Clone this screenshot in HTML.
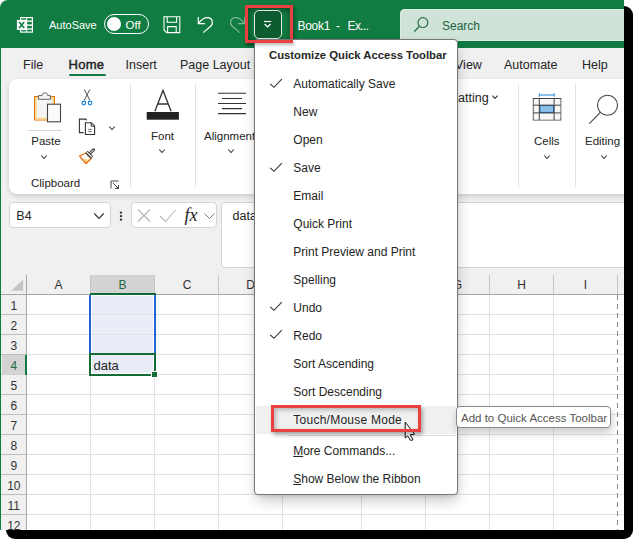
<!DOCTYPE html>
<html><head><meta charset="utf-8"><style>
html,body{margin:0;padding:0;background:#fff;width:639px;height:545px;overflow:hidden}
body{position:relative;font-family:"Liberation Sans", sans-serif}
#shadow{position:absolute;left:5.5px;top:5.5px;width:627.5px;height:533.5px;background:#000;border-radius:9px}
#win{position:absolute;left:0;top:0;width:624px;height:530px;overflow:hidden;border-top-left-radius:8px;background:#f0f0f0}
.t{position:absolute;white-space:pre;line-height:1;font-family:"Liberation Sans", sans-serif}
.r{position:absolute}
</style></head><body>
<div id="shadow"></div><div id="win"><div class="r" style="left:0px;top:0px;width:624px;height:48px;background:#107c41"></div><svg class="r" style="left:0px;top:0px;" width="40" height="40" viewBox="0 0 40 40">
<rect x="20" y="17" width="13" height="15.7" fill="#fff"/>
<rect x="21.2" y="18.2" width="5" height="1.6" fill="#107c41"/>
<rect x="27.2" y="18.2" width="4.6" height="2.3" fill="#107c41"/>
<rect x="27.2" y="21.8" width="4.6" height="2.6" fill="#107c41"/>
<rect x="27.2" y="25.8" width="4.6" height="2.6" fill="#107c41"/>
<rect x="27.2" y="29.7" width="4.6" height="1.8" fill="#107c41"/>
<rect x="21.2" y="30.1" width="5" height="1.4" fill="#107c41"/>
<rect x="16.9" y="19.9" width="9.6" height="10" fill="#fff"/>
<path d="M19.2 22 L24.2 28 M24.2 22 L19.2 28" stroke="#107c41" stroke-width="1.6"/>
</svg><div class="t" style="left:49.00px;top:20.09px;font-size:11px;color:#fff;font-weight:400;">AutoSave</div><div class="r" style="left:104px;top:14px;width:45px;height:20px;border:1.3px solid #fff;border-radius:10px;box-sizing:border-box"></div><div class="r" style="left:107px;top:17px;width:14px;height:14px;background:#fff;border-radius:50%"></div><div class="t" style="left:125.50px;top:19.67px;font-size:11.5px;color:#fff;font-weight:400;">Off</div><svg class="r" style="left:160px;top:14px;" width="24" height="22" viewBox="0 0 24 22">
<path d="M4 2.8 H19.8 V18.6 H6.6 L4 16 Z" fill="none" stroke="#fff" stroke-width="1.1"/>
<path d="M7.2 3 V8.2 H16.6 V3" fill="none" stroke="#fff" stroke-width="1.1"/>
<path d="M7.6 18.5 V12.6 H16.2 V18.5" fill="none" stroke="#fff" stroke-width="1.1"/>
</svg><svg class="r" style="left:190px;top:10px;" width="30" height="30" viewBox="0 0 30 30">
<path d="M8.3 7 V13.6 H15" fill="none" stroke="#fff" stroke-width="1.2"/>
<path d="M8.8 13 C12 8.5 15.5 7.2 18.5 7.6 C22.5 8.3 23.5 13 21.2 15.8 L13.2 22.6" fill="none" stroke="#fff" stroke-width="1.2"/>
</svg><svg class="r" style="left:220px;top:10px;" width="30" height="30" viewBox="0 0 30 30">
<g opacity="0.45"><path d="M24.7 7 V13.6 H18" fill="none" stroke="#fff" stroke-width="1.2"/>
<path d="M24.2 13 C21 8.5 17.5 7.2 14.5 7.6 C10.5 8.3 9.5 13 11.8 15.8 L19.8 22.6" fill="none" stroke="#fff" stroke-width="1.2"/></g>
</svg><div class="t" style="left:297.50px;top:20.34px;font-size:12px;color:#fff;font-weight:400;letter-spacing:-0.3px">Book1</div><div class="t" style="left:336.00px;top:20.34px;font-size:12px;color:#fff;font-weight:400;">-</div><div class="t" style="left:347.50px;top:20.34px;font-size:12px;color:#fff;font-weight:400;letter-spacing:-0.6px">Ex...</div><div class="r" style="left:400px;top:9px;width:260px;height:32px;background:#cfe3d8;border-radius:4px 0 0 0;border:1px solid #dcece3;box-sizing:border-box;box-shadow:0 0 1px #0a6a34"></div><svg class="r" style="left:410px;top:14px;" width="20" height="20" viewBox="0 0 20 20">
<circle cx="12.9" cy="8.6" r="4.9" fill="none" stroke="#2a6e45" stroke-width="1.2"/>
<path d="M9.4 12.1 L4.3 17.7" stroke="#2a6e45" stroke-width="1.3"/>
</svg><div class="t" style="left:442.00px;top:20.44px;font-size:12px;color:#22643c;font-weight:400;">Search</div><div class="r" style="left:0px;top:48px;width:624px;height:250px;background:#f0f0f0"></div><div class="t" style="left:23.00px;top:58.72px;font-size:12.5px;color:#242424;font-weight:400;">File</div><div class="t" style="left:68.50px;top:58.30px;font-size:13px;color:#242424;font-weight:400;-webkit-text-stroke:0.45px #242424;letter-spacing:0.3px">Home</div><div class="r" style="left:68.5px;top:73.5px;width:37px;height:2.5px;background:#107c41;border-radius:1px"></div><div class="t" style="left:125.50px;top:58.72px;font-size:12.5px;color:#242424;font-weight:400;">Insert</div><div class="t" style="left:180.00px;top:58.72px;font-size:12.5px;color:#242424;font-weight:400;">Page Layout</div><div class="t" style="left:455.00px;top:58.72px;font-size:12.5px;color:#242424;font-weight:400;">View</div><div class="t" style="left:504.00px;top:58.72px;font-size:12.5px;color:#242424;font-weight:400;">Automate</div><div class="t" style="left:582.00px;top:58.72px;font-size:12.5px;color:#242424;font-weight:400;">Help</div><div class="r" style="left:9px;top:79px;width:640px;height:115px;background:#fff;border-radius:8px;box-shadow:0 2px 5px rgba(0,0,0,0.16)"></div><div class="r" style="left:130px;top:84px;width:1px;height:103px;background:#e1e1e1"></div><div class="r" style="left:195px;top:84px;width:1px;height:103px;background:#e1e1e1"></div><div class="r" style="left:518px;top:84px;width:1px;height:103px;background:#e1e1e1"></div><div class="r" style="left:574.5px;top:84px;width:1px;height:103px;background:#e1e1e1"></div><svg class="r" style="left:28px;top:86px;" width="40" height="40" viewBox="0 0 40 40">
<rect x="6.5" y="10.5" width="20" height="23.5" fill="#f5f5f5" stroke="#e07000" stroke-width="1"/>
<rect x="7.9" y="11.9" width="17.2" height="20.7" fill="none" stroke="#fbd98f" stroke-width="1.7"/>
<path d="M10.5 13.3 V9.6 H14.2 C14.4 7.2 15.8 6.8 17 6.8 C18.2 6.8 19.6 7.2 19.8 9.6 H22.5 V13.3 Z" fill="#f6f6f6" stroke="#666" stroke-width="1"/>
<rect x="19.5" y="18.2" width="13" height="17.6" fill="#fafafa" stroke="#444" stroke-width="1.1"/>
</svg><div class="r" style="left:28px;top:130px;width:34px;height:1px;background:#d6d6d6"></div><div class="t" style="left:31.30px;top:136.47px;font-size:11.5px;color:#242424;font-weight:400;">Paste</div><svg class="r" style="left:36.3px;top:149.4px;" width="16" height="16" viewBox="0 0 16 16"><path d="M5.25 6.5 L8 9.5 L10.75 6.5" fill="none" stroke="#333" stroke-width="1.1"/></svg><div class="t" style="left:31.00px;top:178.47px;font-size:11.5px;color:#242424;font-weight:400;">Clipboard</div><svg class="r" style="left:108px;top:178px;" width="14" height="14" viewBox="0 0 14 14">
<path d="M3 10.5 V3 H10.5" fill="none" stroke="#444" stroke-width="1"/>
<path d="M5 5 L10.5 10.5 M7 10.5 H10.5 V7" fill="none" stroke="#444" stroke-width="1"/>
</svg><svg class="r" style="left:76px;top:84px;" width="22" height="24" viewBox="0 0 22 24">
<path d="M8.3 5.5 L13.8 16.2 M13.8 5.5 L8.3 16.2" stroke="#555" stroke-width="1"/>
<circle cx="7.8" cy="19" r="1.8" fill="none" stroke="#1a86d9" stroke-width="1.2"/>
<circle cx="14.1" cy="19" r="1.8" fill="none" stroke="#1a86d9" stroke-width="1.2"/>
</svg><svg class="r" style="left:76px;top:116px;" width="22" height="22" viewBox="0 0 22 22">
<path d="M10.7 4.4 L9.8 3.1 H3.4 V16.6 H7.6" fill="none" stroke="#333" stroke-width="1.1"/>
<path d="M9.4 6.7 H15.3 L18.6 9.9 V18.5 H9.4 Z" fill="#fff" stroke="#333" stroke-width="1.1"/>
<path d="M15.2 6.7 V10.2 H18.6" fill="none" stroke="#333" stroke-width="1"/>
<path d="M12.2 13.4 H15.7 M12.2 15.6 H15.7" stroke="#555" stroke-width="0.9"/>
</svg><svg class="r" style="left:103.5px;top:119.5px;" width="16" height="16" viewBox="0 0 16 16"><path d="M5.25 6.5 L8 9.5 L10.75 6.5" fill="none" stroke="#333" stroke-width="1.1"/></svg><svg class="r" style="left:76px;top:146px;" width="22" height="20" viewBox="0 0 22 20">
<path d="M3.5 10 L10 7 L15.3 12.5 L10 17.5 Z" fill="#fff" stroke="#e36c09" stroke-width="1.3" stroke-linejoin="round"/>
<path d="M6.8 13.2 L12.8 13.5 L10 16.4 Z" fill="#f9c86a"/>
<path d="M12.6 8.8 L17.6 3.8" stroke="#444" stroke-width="3" stroke-linecap="round"/>
<path d="M12.6 8.8 L17.4 4" stroke="#fff" stroke-width="1"/>
<path d="M10.5 5.9 L16.1 11.5" stroke="#444" stroke-width="3.2"/>
<path d="M10.8 6.2 L15.8 11.2" stroke="#fff" stroke-width="1.1"/>
</svg><svg class="r" style="left:140px;top:86px;" width="44" height="38" viewBox="0 0 44 38">
<path d="M14.9 25.3 L23 4.4 L31.1 25.3 M18 18 H28.1" fill="none" stroke="#333" stroke-width="1.3"/>
<rect x="6.7" y="26" width="32.2" height="7.7" fill="#222"/>
</svg><div class="t" style="left:151.00px;top:130.87px;font-size:11.5px;color:#242424;font-weight:400;">Font</div><svg class="r" style="left:154.3px;top:143px;" width="16" height="16" viewBox="0 0 16 16"><path d="M5.25 6.5 L8 9.5 L10.75 6.5" fill="none" stroke="#333" stroke-width="1.1"/></svg><svg class="r" style="left:210px;top:88px;" width="44" height="30" viewBox="0 0 44 30">
<path d="M8 5.3 H36 M12 10.5 H32 M8 15.5 H36 M12 20.6 H32 M8 25.6 H36" stroke="#333" stroke-width="1.1"/>
</svg><div class="t" style="left:204.00px;top:130.87px;font-size:11.5px;color:#242424;font-weight:400;">Alignment</div><svg class="r" style="left:223px;top:143px;" width="16" height="16" viewBox="0 0 16 16"><path d="M5.25 6.5 L8 9.5 L10.75 6.5" fill="none" stroke="#333" stroke-width="1.1"/></svg><div class="t" style="left:458.00px;top:91.82px;font-size:12.5px;color:#242424;font-weight:400;">atting</div><svg class="r" style="left:487.3px;top:89.4px;" width="16" height="16" viewBox="0 0 16 16"><path d="M5.4 6.65 L8 9.35 L10.6 6.65" fill="none" stroke="#333" stroke-width="1.1"/></svg><svg class="r" style="left:528px;top:86px;" width="40" height="40" viewBox="0 0 40 40">
<path d="M11.3 9 H26.1 M11.3 7.3 V10.7 M26.1 7.3 V10.7" stroke="#1a86d9" stroke-width="1"/>
<rect x="5.3" y="12.5" width="27.5" height="21.5" fill="#fff" stroke="#444" stroke-width="1"/>
<rect x="5.8" y="13" width="26.5" height="20.5" fill="#f7f7f7"/><rect x="11.8" y="19.5" width="13.8" height="7" fill="#8cc1ea" stroke="#1a6fc0" stroke-width="1.2"/>
<path d="M5.3 19.2 H32.8 M5.3 26.9 H32.8 M11.3 12.5 V34 M26.1 12.5 V34" stroke="#444" stroke-width="1" fill="none"/>
</svg><div class="t" style="left:534.00px;top:135.87px;font-size:11.5px;color:#242424;font-weight:400;">Cells</div><svg class="r" style="left:538.5px;top:148.5px;" width="16" height="16" viewBox="0 0 16 16"><path d="M5.25 6.5 L8 9.5 L10.75 6.5" fill="none" stroke="#333" stroke-width="1.1"/></svg><svg class="r" style="left:585px;top:90px;" width="40" height="38" viewBox="0 0 40 38">
<circle cx="22.5" cy="15.2" r="10" fill="none" stroke="#444" stroke-width="1.1"/>
<path d="M15.3 22.3 L4.3 33.7" stroke="#444" stroke-width="1.1"/>
</svg><div class="t" style="left:585.00px;top:135.87px;font-size:11.5px;color:#242424;font-weight:400;">Editing</div><svg class="r" style="left:595.5px;top:148.5px;" width="16" height="16" viewBox="0 0 16 16"><path d="M5.25 6.5 L8 9.5 L10.75 6.5" fill="none" stroke="#333" stroke-width="1.1"/></svg><div class="r" style="left:9px;top:202px;width:101.5px;height:25.5px;background:#fff;border:1px solid #d4d4d4;border-radius:4px;box-sizing:border-box"></div><div class="t" style="left:16.30px;top:209.82px;font-size:12.5px;color:#242424;font-weight:400;">B4</div><svg class="r" style="left:91.3px;top:208.3px;" width="16" height="16" viewBox="0 0 16 16"><path d="M3.25 5.5 L8 10.5 L12.75 5.5" fill="none" stroke="#333" stroke-width="1.2"/></svg><svg class="r" style="left:116px;top:208px;" width="10" height="16" viewBox="0 0 10 16"><circle cx="5" cy="4.6" r="1.2" fill="#333"/><circle cx="5" cy="8.1" r="1.2" fill="#333"/><circle cx="5" cy="11.6" r="1.2" fill="#333"/></svg><div class="r" style="left:131.3px;top:202px;width:85.5px;height:25.5px;background:#fff;border:1px solid #d4d4d4;border-radius:4px;box-sizing:border-box"></div><svg class="r" style="left:131px;top:202px;" width="90" height="26" viewBox="0 0 90 26">
<path d="M7 7.5 L19 19.5 M19 7.5 L7 19.5" stroke="#b5b5b5" stroke-width="1.1"/>
<path d="M29 14 L34.5 19.5 L44.5 8" fill="none" stroke="#b5b5b5" stroke-width="1.1"/>
<path d="M73.5 11.5 L78.5 16.5 L83.5 11.5" fill="none" stroke="#777" stroke-width="1"/>
</svg><div class="t" style="left:184.5px;top:205.5px;font-family:'Liberation Serif',serif;font-style:italic;font-size:18px;color:#222">fx</div><div class="r" style="left:220.8px;top:202px;width:420px;height:65.5px;background:#fff;border:1px solid #d4d4d4;border-radius:4px;box-sizing:border-box"></div><div class="t" style="left:232.50px;top:210.02px;font-size:12.5px;color:#242424;font-weight:400;">data</div><div class="r" style="left:26.5px;top:294.5px;width:600px;height:240px;background:#fff"></div><div class="r" style="left:92.3px;top:296.3px;width:60.5px;height:76.5px;background:#e8edf8"></div><div class="r" style="left:0px;top:314px;width:26px;height:1px;background:#bdbdbd"></div><div class="r" style="left:26.5px;top:314px;width:600px;height:1px;background:#e1e1e1"></div><div class="r" style="left:0px;top:334px;width:26px;height:1px;background:#bdbdbd"></div><div class="r" style="left:26.5px;top:334px;width:600px;height:1px;background:#e1e1e1"></div><div class="r" style="left:0px;top:354px;width:26px;height:1px;background:#bdbdbd"></div><div class="r" style="left:26.5px;top:354px;width:600px;height:1px;background:#e1e1e1"></div><div class="r" style="left:0px;top:374px;width:26px;height:1px;background:#bdbdbd"></div><div class="r" style="left:26.5px;top:374px;width:600px;height:1px;background:#e1e1e1"></div><div class="r" style="left:0px;top:394px;width:26px;height:1px;background:#bdbdbd"></div><div class="r" style="left:26.5px;top:394px;width:600px;height:1px;background:#e1e1e1"></div><div class="r" style="left:0px;top:414px;width:26px;height:1px;background:#bdbdbd"></div><div class="r" style="left:26.5px;top:414px;width:600px;height:1px;background:#e1e1e1"></div><div class="r" style="left:0px;top:434px;width:26px;height:1px;background:#bdbdbd"></div><div class="r" style="left:26.5px;top:434px;width:600px;height:1px;background:#e1e1e1"></div><div class="r" style="left:0px;top:454px;width:26px;height:1px;background:#bdbdbd"></div><div class="r" style="left:26.5px;top:454px;width:600px;height:1px;background:#e1e1e1"></div><div class="r" style="left:0px;top:474px;width:26px;height:1px;background:#bdbdbd"></div><div class="r" style="left:26.5px;top:474px;width:600px;height:1px;background:#e1e1e1"></div><div class="r" style="left:0px;top:494px;width:26px;height:1px;background:#bdbdbd"></div><div class="r" style="left:26.5px;top:494px;width:600px;height:1px;background:#e1e1e1"></div><div class="r" style="left:0px;top:514px;width:26px;height:1px;background:#bdbdbd"></div><div class="r" style="left:26.5px;top:514px;width:600px;height:1px;background:#e1e1e1"></div><div class="r" style="left:0px;top:534px;width:26px;height:1px;background:#bdbdbd"></div><div class="r" style="left:26.5px;top:534px;width:600px;height:1px;background:#e1e1e1"></div><div class="r" style="left:90px;top:295px;width:1px;height:240px;background:#e1e1e1"></div><div class="r" style="left:154px;top:295px;width:1px;height:240px;background:#e1e1e1"></div><div class="r" style="left:218px;top:295px;width:1px;height:240px;background:#e1e1e1"></div><div class="r" style="left:282px;top:295px;width:1px;height:240px;background:#e1e1e1"></div><div class="r" style="left:361px;top:295px;width:1px;height:240px;background:#e1e1e1"></div><div class="r" style="left:425px;top:295px;width:1px;height:240px;background:#e1e1e1"></div><div class="r" style="left:489px;top:295px;width:1px;height:240px;background:#e1e1e1"></div><div class="r" style="left:553px;top:295px;width:1px;height:240px;background:#e1e1e1"></div><div class="r" style="left:617px;top:295px;width:1px;height:240px;background:repeating-linear-gradient(to bottom,#8a8a8a 0 5px,transparent 5px 9px)"></div><div class="r" style="left:90.5px;top:275px;width:64.5px;height:19.5px;background:#d3d3d3"></div><div class="r" style="left:90px;top:275px;width:1px;height:19.5px;background:#c6c6c6"></div><div class="r" style="left:154px;top:275px;width:1px;height:19.5px;background:#c6c6c6"></div><div class="r" style="left:218px;top:275px;width:1px;height:19.5px;background:#c6c6c6"></div><div class="r" style="left:282px;top:275px;width:1px;height:19.5px;background:#c6c6c6"></div><div class="r" style="left:361px;top:275px;width:1px;height:19.5px;background:#c6c6c6"></div><div class="r" style="left:425px;top:275px;width:1px;height:19.5px;background:#c6c6c6"></div><div class="r" style="left:489px;top:275px;width:1px;height:19.5px;background:#c6c6c6"></div><div class="r" style="left:553px;top:275px;width:1px;height:19.5px;background:#c6c6c6"></div><div class="r" style="left:617px;top:275px;width:1px;height:19.5px;background:#c6c6c6"></div><div class="r" style="left:0px;top:294px;width:624px;height:1px;background:#a6a6a6"></div><div class="r" style="left:26px;top:275px;width:1px;height:260px;background:#a6a6a6"></div><svg class="r" style="left:10px;top:278px;" width="16" height="14" viewBox="0 0 16 14"><path d="M1.3 12.8 H13.2 V1.4 Z" fill="#c4c4c4"/></svg><div class="t" style="left:-41.50px;width:200px;text-align:center;top:279.44px;font-size:12px;color:#333;font-weight:400;">A</div><div class="t" style="left:22.50px;width:200px;text-align:center;top:279.44px;font-size:12px;color:#1d6b3e;font-weight:400;">B</div><div class="t" style="left:87.00px;width:200px;text-align:center;top:279.44px;font-size:12px;color:#333;font-weight:400;">C</div><div class="t" style="left:150.50px;width:200px;text-align:center;top:279.44px;font-size:12px;color:#333;font-weight:400;">D</div><div class="t" style="left:221.50px;width:200px;text-align:center;top:279.44px;font-size:12px;color:#333;font-weight:400;">E</div><div class="t" style="left:293.00px;width:200px;text-align:center;top:279.44px;font-size:12px;color:#333;font-weight:400;">F</div><div class="t" style="left:357.50px;width:200px;text-align:center;top:279.44px;font-size:12px;color:#333;font-weight:400;">G</div><div class="t" style="left:421.60px;width:200px;text-align:center;top:279.44px;font-size:12px;color:#333;font-weight:400;">H</div><div class="t" style="left:485.50px;width:200px;text-align:center;top:279.44px;font-size:12px;color:#333;font-weight:400;">I</div><div class="r" style="left:2px;top:354.5px;width:24.5px;height:20px;background:#d3d3d3"></div><div class="t" style="left:-86.20px;width:200px;text-align:center;top:300.44px;font-size:12px;color:#333;font-weight:400;">1</div><div class="t" style="left:-86.20px;width:200px;text-align:center;top:320.44px;font-size:12px;color:#333;font-weight:400;">2</div><div class="t" style="left:-86.20px;width:200px;text-align:center;top:340.44px;font-size:12px;color:#333;font-weight:400;">3</div><div class="t" style="left:-86.20px;width:200px;text-align:center;top:360.44px;font-size:12px;color:#1d6b3e;font-weight:400;">4</div><div class="t" style="left:-86.20px;width:200px;text-align:center;top:380.44px;font-size:12px;color:#333;font-weight:400;">5</div><div class="t" style="left:-86.20px;width:200px;text-align:center;top:400.44px;font-size:12px;color:#333;font-weight:400;">6</div><div class="t" style="left:-86.20px;width:200px;text-align:center;top:420.44px;font-size:12px;color:#333;font-weight:400;">7</div><div class="t" style="left:-86.20px;width:200px;text-align:center;top:440.44px;font-size:12px;color:#333;font-weight:400;">8</div><div class="t" style="left:-86.20px;width:200px;text-align:center;top:460.44px;font-size:12px;color:#333;font-weight:400;">9</div><div class="t" style="left:-86.20px;width:200px;text-align:center;top:480.44px;font-size:12px;color:#333;font-weight:400;">10</div><div class="t" style="left:-86.20px;width:200px;text-align:center;top:500.44px;font-size:12px;color:#333;font-weight:400;">11</div><div class="t" style="left:-86.20px;width:200px;text-align:center;top:520.44px;font-size:12px;color:#333;font-weight:400;">12</div><div class="r" style="left:90px;top:293px;width:66px;height:2px;background:#0e6b35"></div><div class="r" style="left:25px;top:354.5px;width:2px;height:20px;background:#107c41"></div><div class="r" style="left:89px;top:295px;width:67px;height:58px;border:2px solid #2563d0;border-bottom:none;border-top:none;box-sizing:border-box"></div><div class="r" style="left:89px;top:353px;width:67px;height:23px;border:2px solid #156b36;box-sizing:border-box"></div><div class="r" style="left:150.8px;top:371px;width:7.2px;height:7px;background:#fff"></div><div class="r" style="left:151.9px;top:372px;width:5.1px;height:5px;background:#156b36"></div><div class="t" style="left:93.50px;top:359.20px;font-size:13px;color:#242424;font-weight:400;">data</div><div class="r" style="left:0px;top:40px;width:1.2px;height:490px;background:#107c41"></div><div class="r" style="left:247.5px;top:8px;width:43px;height:32px;background:#107c41;box-shadow:inset 3px 3px 5px rgba(0,0,0,0.28), inset -3px -1px 5px rgba(0,0,0,0.2)"></div><div class="r" style="left:254px;top:10px;width:28px;height:29px;background:#0d5c31;border:1px solid #e5e5e5;border-radius:5px;box-sizing:border-box"></div><svg class="r" style="left:254px;top:10px;" width="28" height="29" viewBox="0 0 28 29"><path d="M10 11.5 H17.2" stroke="#fff" stroke-width="1.1"/><path d="M10.6 14 L13.6 17 L16.6 14" fill="none" stroke="#fff" stroke-width="1.2"/></svg><div class="r" style="left:244.5px;top:5px;width:48.5px;height:38px;border:3px solid #ec3f42;box-sizing:border-box;box-shadow:2px 2px 4px rgba(0,0,0,0.3)"></div><div class="r" style="left:254px;top:39px;width:204px;height:455.5px;background:#fff;border:1px solid #787878;border-radius:4px;box-sizing:border-box;box-shadow:1px 7px 14px -2px rgba(0,0,0,0.24), 0 1px 3px rgba(0,0,0,0.10)"></div><div class="r" style="left:244.5px;top:40px;width:48.5px;height:3px;background:#ec3f42;box-shadow:1px 2px 3px rgba(0,0,0,0.3)"></div><div class="t" style="left:269.00px;top:49.83px;font-size:11.3px;color:#242424;font-weight:700;color:#262626">Customize Quick Access Toolbar</div><div class="r" style="left:256px;top:406px;width:200px;height:27.5px;background:#f0f0f0"></div><div class="t" style="left:293.30px;top:78.24px;font-size:12px;color:#242424;font-weight:400;">Automatically Save</div><svg class="r" style="left:266px;top:76.8px;" width="20" height="14" viewBox="0 0 20 14"><path d="M4.2 6.8 L8 10.3 L15.8 2.2" fill="none" stroke="#333" stroke-width="1.1"/></svg><div class="t" style="left:293.30px;top:106.19px;font-size:12px;color:#242424;font-weight:400;">New</div><div class="t" style="left:293.30px;top:134.14px;font-size:12px;color:#242424;font-weight:400;">Open</div><div class="t" style="left:293.30px;top:162.09px;font-size:12px;color:#242424;font-weight:400;">Save</div><svg class="r" style="left:266px;top:160.64999999999998px;" width="20" height="14" viewBox="0 0 20 14"><path d="M4.2 6.8 L8 10.3 L15.8 2.2" fill="none" stroke="#333" stroke-width="1.1"/></svg><div class="t" style="left:293.30px;top:190.04px;font-size:12px;color:#242424;font-weight:400;">Email</div><div class="t" style="left:293.30px;top:217.99px;font-size:12px;color:#242424;font-weight:400;">Quick Print</div><div class="t" style="left:293.30px;top:245.94px;font-size:12px;color:#242424;font-weight:400;">Print Preview and Print</div><div class="t" style="left:293.30px;top:273.89px;font-size:12px;color:#242424;font-weight:400;">Spelling</div><div class="t" style="left:293.30px;top:301.84px;font-size:12px;color:#242424;font-weight:400;">Undo</div><svg class="r" style="left:266px;top:300.4px;" width="20" height="14" viewBox="0 0 20 14"><path d="M4.2 6.8 L8 10.3 L15.8 2.2" fill="none" stroke="#333" stroke-width="1.1"/></svg><div class="t" style="left:293.30px;top:329.79px;font-size:12px;color:#242424;font-weight:400;">Redo</div><svg class="r" style="left:266px;top:328.34999999999997px;" width="20" height="14" viewBox="0 0 20 14"><path d="M4.2 6.8 L8 10.3 L15.8 2.2" fill="none" stroke="#333" stroke-width="1.1"/></svg><div class="t" style="left:293.30px;top:357.74px;font-size:12px;color:#242424;font-weight:400;">Sort Ascending</div><div class="t" style="left:293.30px;top:385.69px;font-size:12px;color:#242424;font-weight:400;">Sort Descending</div><div class="t" style="left:293.30px;top:413.64px;font-size:12px;color:#242424;font-weight:400;letter-spacing:0.25px">Touch/Mouse Mode</div><div class="r" style="left:287px;top:435px;width:169px;height:1px;background:#e0e0e0"></div><div class="t" style="left:293.20px;top:445.14px;font-size:12px;color:#242424;font-weight:400;"><u>M</u>ore Commands...</div><div class="t" style="left:293.20px;top:473.44px;font-size:12px;color:#242424;font-weight:400;"><u>S</u>how Below the Ribbon</div><svg class="r" style="left:398px;top:415px;" width="26" height="30" viewBox="0 0 26 30"><path d="M7.2 7.2 V23 L9.6 20.9 L12.8 25.6 L15 24.7 L12.2 19.8 L16.6 19.2 Z" fill="#fff" stroke="#111" stroke-width="1" stroke-linejoin="round"/></svg><div class="r" style="left:271px;top:405px;width:50px;height:27px;"></div><div class="r" style="left:271px;top:405px;width:150px;height:27px;border:3px solid #ec3f42;box-sizing:border-box;box-shadow:2px 3px 4px rgba(0,0,0,0.3), inset 2px 2px 4px rgba(0,0,0,0.25)"></div><div class="r" style="left:456px;top:405.8px;width:155px;height:22.5px;background:#fff;border:1px solid #8a8a8a;border-radius:4px;box-sizing:border-box;box-shadow:1px 5px 9px rgba(0,0,0,0.2)"></div><div class="t" style="left:461.00px;top:412.87px;font-size:11.5px;color:#555;font-weight:400;">Add to Quick Access Toolbar</div></div>
</body></html>
